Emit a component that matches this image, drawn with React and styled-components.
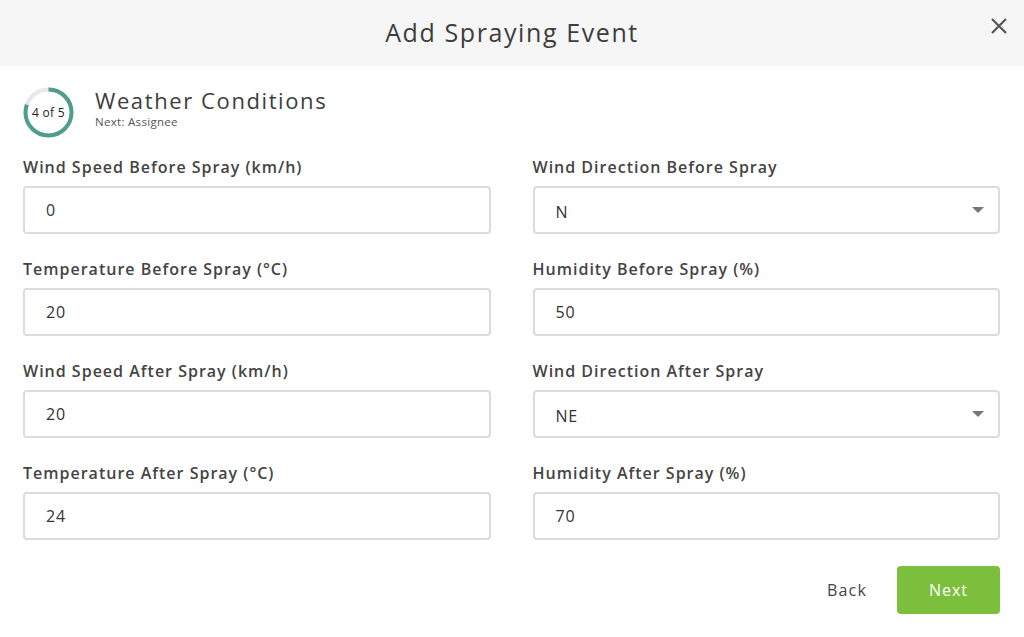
import React from 'react'
import styled, { createGlobalStyle } from 'styled-components'

const GlobalStyle = createGlobalStyle`
    html, body {
        margin: 0;
        padding: 0;
        background: #fff;
        font-family: "Open Sans", "Noto Sans", sans-serif;
        color: #444;
    }
`;

const Modal = styled.div`
    width: 1024px;
    height: 637px;
    display: flex;
    flex-direction: column;
    background: #fff;
`;

const Header = styled.div`
    position: relative;
    height: 66px;
    display: flex;
    align-items: center;
    justify-content: center;
    background: #f6f6f6;
`;

const Title = styled.h1`
    margin: 0 0 2px;
    font-size: 25px;
    font-weight: 500;
    letter-spacing: 1.6px;
    color: #3d3d3d;
`;

const CloseButton = styled.button`
    position: absolute;
    right: 14px;
    top: 15px;
    width: 22px;
    height: 22px;
    padding: 0;
    border: none;
    background: transparent;
    display: flex;
    align-items: center;
    justify-content: center;
`;

const Body = styled.div`
    padding: 20px 24px 0 23px;
    display: flex;
    flex-direction: column;
`;

const StepRow = styled.div`
    display: flex;
    align-items: center;
    gap: 21px;
    margin-top: 1px;
`;

const Ring = styled.div`
    position: relative;
    width: 51px;
    height: 51px;
    display: flex;
    align-items: center;
    justify-content: center;
`;

const RingLabel = styled.span`
    position: absolute;
    font-size: 12px;
    letter-spacing: 0.3px;
    color: #222;
    font-weight: 500;
`;

const StepText = styled.div`
    display: flex;
    flex-direction: column;
    margin-top: -11px;
`;

const StepTitle = styled.div`
    font-size: 22px;
    font-weight: 500;
    letter-spacing: 1.6px;
    color: #3d3d3d;
    line-height: 28px;
`;

const StepNext = styled.div`
    margin-top: 1px;
    font-size: 11.5px;
    letter-spacing: 0.3px;
    color: #555;
    line-height: 14px;
`;

const Grid = styled.div`
    display: grid;
    grid-template-columns: 1fr 1fr;
    column-gap: 42px;
    row-gap: 24px;
    margin-top: 18px;
`;

const Field = styled.div`
    display: flex;
    flex-direction: column;
`;

const Label = styled.label`
    font-size: 16px;
    font-weight: 600;
    letter-spacing: 1px;
    color: #444;
    line-height: 22px;
    margin-bottom: 8px;
`;

const Box = styled.div`
    box-sizing: border-box;
    height: 48px;
    border: 2px solid #dcdcdc;
    border-radius: 4px;
    display: flex;
    align-items: center;
    justify-content: space-between;
    padding: 0 14px 0 21px;
    font-size: 16px;
    letter-spacing: 0.8px;
    color: #333;
    padding-top: ${props => props.$select ? '4px' : '0'};
`;

const Caret = styled.span`
    width: 0;
    height: 0;
    border-left: 6px solid transparent;
    border-right: 6px solid transparent;
    border-top: 6px solid #777;
    margin-top: -4px;
`;

const Footer = styled.div`
    display: flex;
    justify-content: flex-end;
    align-items: center;
    gap: 30px;
    margin-top: 26px;
`;

const BackButton = styled.button`
    border: none;
    background: transparent;
    font-family: inherit;
    font-size: 16px;
    letter-spacing: 1.2px;
    color: #444;
    padding: 0;
`;

const NextButton = styled.button`
    width: 103px;
    height: 48px;
    border: none;
    border-radius: 4px;
    background: #7cbf3c;
    color: #fff;
    font-family: inherit;
    font-size: 16px;
    letter-spacing: 1px;
`;

const fields = [
    { label: 'Wind Speed Before Spray (km/h)', value: '0' },
    { label: 'Wind Direction Before Spray', value: 'N', select: true },
    { label: 'Temperature Before Spray (°C)', value: '20' },
    { label: 'Humidity Before Spray (%)', value: '50' },
    { label: 'Wind Speed After Spray (km/h)', value: '20' },
    { label: 'Wind Direction After Spray', value: 'NE', select: true },
    { label: 'Temperature After Spray (°C)', value: '24' },
    { label: 'Humidity After Spray (%)', value: '70' },
];

const ProgressRing = ({ step, total }) => {
    const r = 23;
    const c = 2 * Math.PI * r;
    const done = (step / total) * c;
    return (
        <Ring>
            <svg width="51" height="51" viewBox="0 0 51 51">
                <circle cx="25.5" cy="25.5" r={r} fill="none" stroke="#e8e8e8" strokeWidth="4" />
                <circle
                    cx="25.5" cy="25.5" r={r} fill="none" stroke="#4f9d8c" strokeWidth="4"
                    strokeDasharray={`${done} ${c}`}
                    transform="rotate(-90 25.5 25.5)"
                />
            </svg>
            <RingLabel>{step} of {total}</RingLabel>
        </Ring>
    );
};

export default function App() {
    return (
        <Modal>
            <GlobalStyle />
            <Header>
                <Title>Add Spraying Event</Title>
                <CloseButton>
                    <svg width="16" height="16" viewBox="0 0 16 16">
                        <path d="M1 1 L15 15 M15 1 L1 15" stroke="#555" strokeWidth="2.2" />
                    </svg>
                </CloseButton>
            </Header>
            <Body>
                <StepRow>
                    <ProgressRing step={4} total={5} />
                    <StepText>
                        <StepTitle>Weather Conditions</StepTitle>
                        <StepNext>Next: Assignee</StepNext>
                    </StepText>
                </StepRow>
                <Grid>
                    {fields.map(f => (
                        <Field key={f.label}>
                            <Label>{f.label}</Label>
                            <Box $select={f.select}>
                                <span>{f.value}</span>
                                {f.select ? <Caret /> : null}
                            </Box>
                        </Field>
                    ))}
                </Grid>
                <Footer>
                    <BackButton>Back</BackButton>
                    <NextButton>Next</NextButton>
                </Footer>
            </Body>
        </Modal>
    );
}
